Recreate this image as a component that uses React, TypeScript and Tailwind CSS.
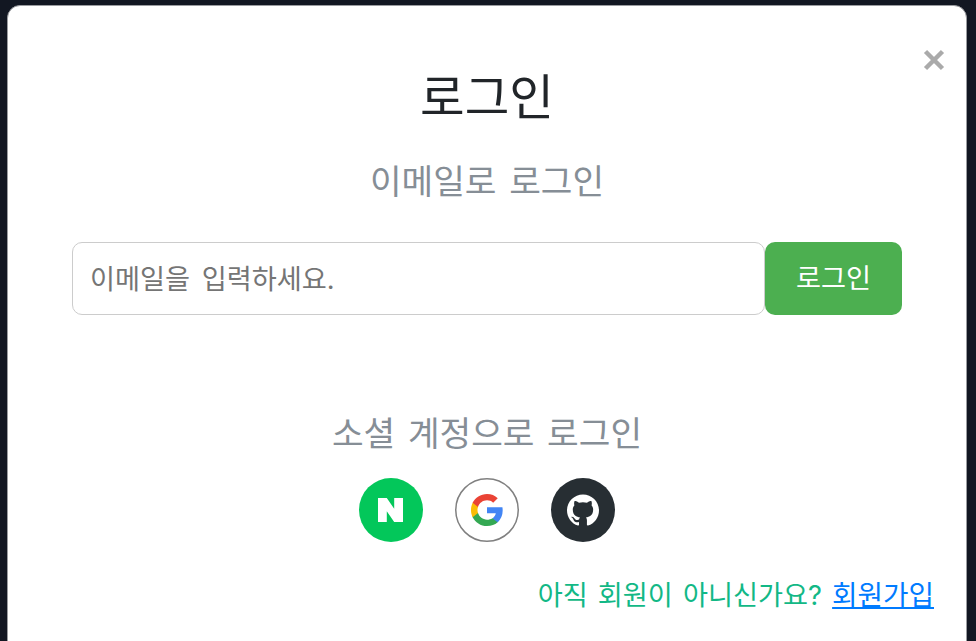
import React from 'react';
import { SiGithub } from 'react-icons/si';

const fontStack = "font-['Inter','Noto_Sans_CJK_KR',sans-serif]";

const NaverIcon = () => (
  <svg viewBox="0 0 64 64" className="w-16 h-16 block">
    <circle cx="32" cy="32" r="32" fill="#03c75a" />
    <path d="M19 20h8.800l7.400 10.800V20H44v24h-8.800l-7.400-10.800V44H19z" fill="#fff" />
  </svg>
);

const GoogleIcon = () => (
  <svg viewBox="0 0 64 64" className="w-16 h-16 block">
    <circle cx="32" cy="32" r="31.250" fill="#fff" stroke="#808080" strokeWidth="1.500" />
    <g transform="translate(16 16) scale(0.667)">
      <path fill="#4285F4" d="M47.500 24.600c0-1.700-.2-3.300-.4-4.800H24v9.100h13.200c-.6 3-2.300 5.600-4.900 7.300v6h7.900c4.600-4.300 7.300-10.500 7.300-17.600z" />
      <path fill="#34A853" d="M24 48c6.500 0 11.900-2.100 15.900-5.800l-7.900-6c-2.100 1.400-4.900 2.300-8 2.300-6.300 0-11.600-4.200-13.500-9.900H2.400v6.200C6.300 42.600 14.500 48 24 48z" />
      <path fill="#FBBC05" d="M10.500 28.600c-.5-1.400-.8-3-.8-4.600s.3-3.200.8-4.600v-6.200H2.400C.9 16.400 0 20.100 0 24s.9 7.600 2.400 10.800l8.100-6.200z" />
      <path fill="#EA4335" d="M24 9.500c3.500 0 6.700 1.200 9.200 3.600l6.900-6.900C35.900 2.400 30.500 0 24 0 14.500 0 6.300 5.400 2.400 13.200l8.100 6.200C12.400 13.700 17.700 9.500 24 9.500z" />
    </g>
  </svg>
);

const GithubIcon = () => (
  <div className="w-16 h-16 rounded-full bg-[#272e33] flex items-center justify-center">
    <SiGithub className="w-8 h-8 text-white" />
  </div>
);

export default function App() {
  return (
    <div className={`h-screen overflow-hidden bg-[#121722] pt-[5px] pl-[7px] ${fontStack}`}>
      <div className="relative h-[700px] w-[960px] rounded-[13px] border border-[#9a9ca0] bg-white pt-[60px] flex flex-col items-center">
        <button className="absolute right-[16px] top-[38px] w-8 h-8 flex items-center justify-center text-[#aaaaaa]">
          <svg viewBox="0 0 22 22" className="w-[22px] h-[22px]">
            <path d="M2.500 2.500 19.500 19.500M19.500 2.500 2.500 19.500" stroke="currentColor" strokeWidth="4.500" />
          </svg>
        </button>

        <h1 className="text-[48.500px] leading-[64px] text-[#212529]">로그인</h1>
        <h2 className="mt-[31px] text-[34.400px] leading-[42px] text-[#868e96] [word-spacing:3px]">이메일로 로그인</h2>

        <form className="mt-[39px] flex w-[830px]">
          <input
            placeholder="이메일을 입력하세요."
            className="h-[73px] flex-1 rounded-[10px] border border-[#cccccc] pl-[17px] pr-[17px] pt-[2px] text-[27.200px] placeholder:text-[#757575] outline-none [word-spacing:4px]"
          />
          <button type="button" className="h-[73px] w-[137px] rounded-[10px] bg-[#4caf50] pt-[2px] text-[27.200px] text-white">
            로그인
          </button>
        </form>

        <h2 className="mt-[98px] text-[34.400px] leading-[42px] text-[#868e96] [word-spacing:3px]">소셜 계정으로 로그인</h2>

        <div className="mt-[23px] flex gap-8">
          <NaverIcon />
          <GoogleIcon />
          <GithubIcon />
        </div>

        <p className="mt-[32px] self-end pr-[32px] text-[27.200px] leading-[42px] text-[#12b886] [word-spacing:2.500px]">
          아직 회원이 아니신가요?{' '}
          <a href="#" className="text-[27.700px] text-[#007bff] underline">회원가입</a>
        </p>
      </div>
    </div>
  );
}
